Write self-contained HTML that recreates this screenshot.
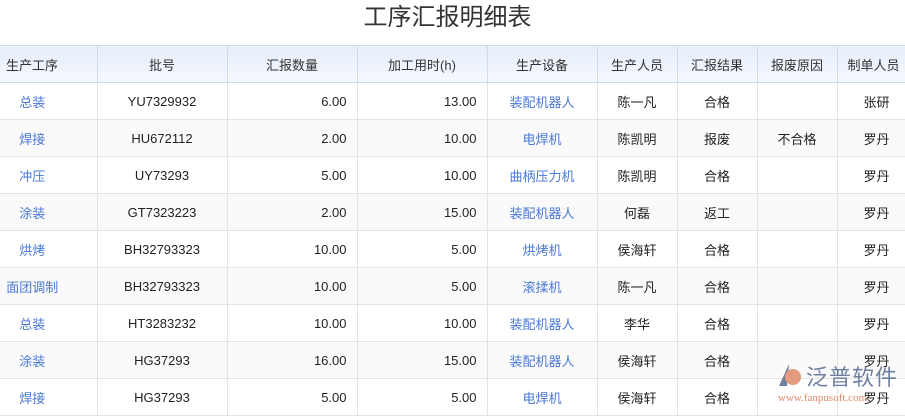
<!DOCTYPE html><html><head><meta charset="utf-8"><style>
body{margin:0;width:905px;height:411px;overflow:hidden;background:#fff;font-family:"Liberation Sans","Noto Sans CJK SC",sans-serif;font-size:13px;color:#222;position:relative}
h1{margin:0;position:absolute;top:2px;left:0;width:895px;text-align:center;font-weight:normal;font-size:24px;color:#333;line-height:32px}
table{position:absolute;top:45px;left:0;border-collapse:collapse;table-layout:fixed;width:925px}
td,th{height:36px;border:1px solid #e3e3e3;padding:0 10px;text-align:center;white-space:nowrap;overflow:hidden}
th{font-weight:normal;color:#333;background:linear-gradient(#e6eefb,#f5f8fe);border-color:#cfdbe8;border-top:1px solid #cfdbe8}
th:first-child,td:first-child{border-left:none;padding:0 32px 0 0}
tr:nth-child(odd) td{background:#fafafa}
.a{color:#4a78d6}.r{text-align:right}
.wm{position:absolute;left:806px;top:364px;color:#6e7fa0;font-size:22px;letter-spacing:1px;white-space:nowrap;line-height:28px}
.wm2{position:absolute;left:778px;top:392px;color:#e08a6a;font-size:11px;font-family:"Liberation Serif",serif;white-space:nowrap}
</style></head><body>
<h1>工序汇报明细表</h1>
<table>
<colgroup><col style="width:97px"><col style="width:130px"><col style="width:130px"><col style="width:130px"><col style="width:110px"><col style="width:80px"><col style="width:80px"><col style="width:80px"><col style="width:88px"></colgroup>
<tr><th style="text-align:left;padding-left:6px">生产工序</th><th>批号</th><th>汇报数量</th><th>加工用时(h)</th><th>生产设备</th><th>生产人员</th><th>汇报结果</th><th>报废原因</th><th style="text-align:left">制单人员</th></tr>
<tr><td class="a">总装</td><td>YU7329932</td><td class="r">6.00</td><td class="r">13.00</td><td class="a">装配机器人</td><td>陈一凡</td><td>合格</td><td></td><td style="text-align:left;padding-left:26px">张研</td></tr>
<tr><td class="a">焊接</td><td>HU672112</td><td class="r">2.00</td><td class="r">10.00</td><td class="a">电焊机</td><td>陈凯明</td><td>报废</td><td>不合格</td><td style="text-align:left;padding-left:26px">罗丹</td></tr>
<tr><td class="a">冲压</td><td>UY73293</td><td class="r">5.00</td><td class="r">10.00</td><td class="a">曲柄压力机</td><td>陈凯明</td><td>合格</td><td></td><td style="text-align:left;padding-left:26px">罗丹</td></tr>
<tr><td class="a">涂装</td><td>GT7323223</td><td class="r">2.00</td><td class="r">15.00</td><td class="a">装配机器人</td><td>何磊</td><td>返工</td><td></td><td style="text-align:left;padding-left:26px">罗丹</td></tr>
<tr><td class="a">烘烤</td><td>BH32793323</td><td class="r">10.00</td><td class="r">5.00</td><td class="a">烘烤机</td><td>侯海轩</td><td>合格</td><td></td><td style="text-align:left;padding-left:26px">罗丹</td></tr>
<tr><td class="a">面团调制</td><td>BH32793323</td><td class="r">10.00</td><td class="r">5.00</td><td class="a">滚揉机</td><td>陈一凡</td><td>合格</td><td></td><td style="text-align:left;padding-left:26px">罗丹</td></tr>
<tr><td class="a">总装</td><td>HT3283232</td><td class="r">10.00</td><td class="r">10.00</td><td class="a">装配机器人</td><td>李华</td><td>合格</td><td></td><td style="text-align:left;padding-left:26px">罗丹</td></tr>
<tr><td class="a">涂装</td><td>HG37293</td><td class="r">16.00</td><td class="r">15.00</td><td class="a">装配机器人</td><td>侯海轩</td><td>合格</td><td></td><td style="text-align:left;padding-left:26px">罗丹</td></tr>
<tr><td class="a">焊接</td><td>HG37293</td><td class="r">5.00</td><td class="r">5.00</td><td class="a">电焊机</td><td>侯海轩</td><td>合格</td><td></td><td style="text-align:left;padding-left:26px">罗丹</td></tr>
</table>
<svg style="position:absolute;left:775px;top:362px" width="28" height="28"><path d="M14 2 L4 24 L12 24 Z" fill="#6e7fa0"/><circle cx="18" cy="15" r="8" fill="#e39a7f"/></svg>
<div class="wm">泛普软件</div>
<div class="wm2">www.fanpusoft.com</div>
</body></html>
